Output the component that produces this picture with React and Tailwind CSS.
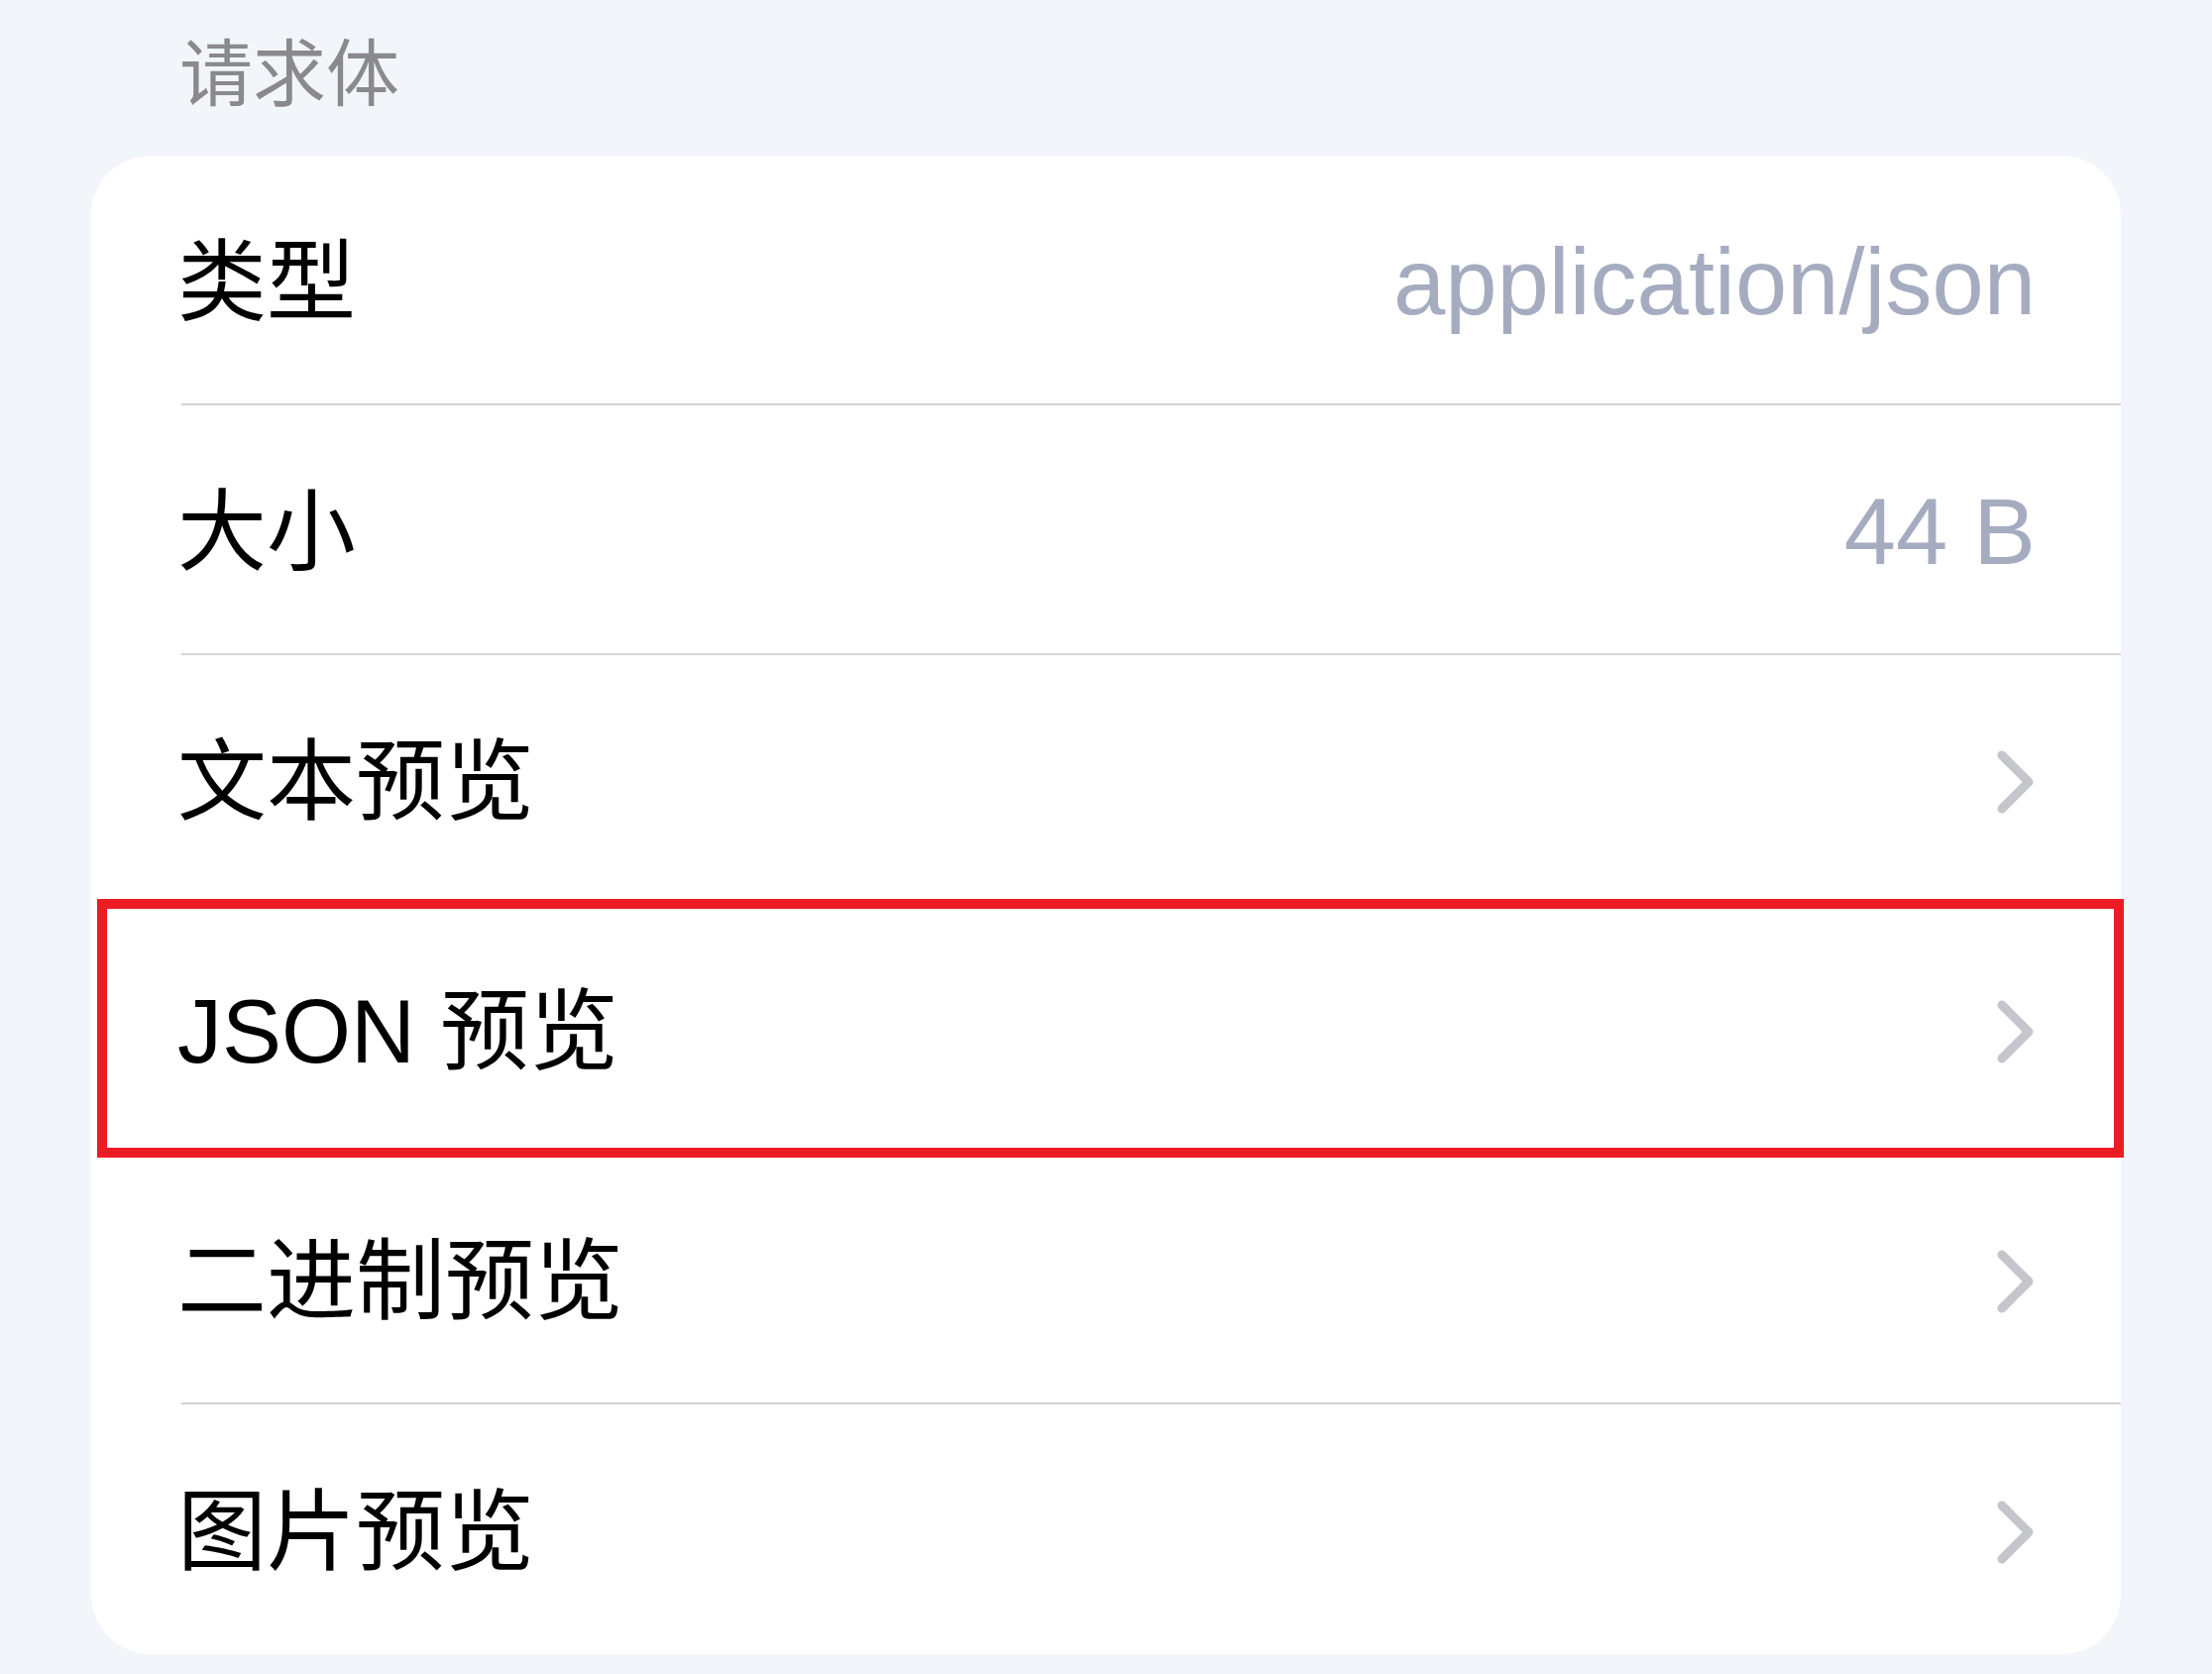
import { Fragment } from "react";

const rows = [
  { label: "类型", value: "application/json" },
  { label: "大小", value: "44 B" },
  { label: "文本预览", chevron: true },
  { label: "JSON 预览", chevron: true, marked: true },
  { label: "二进制预览", chevron: true },
  { label: "图片预览", chevron: true, last: true },
];

function Chevron() {
  return (
    <svg width="40" height="66" viewBox="0 0 40 66" fill="none" className="shrink-0">
      <polyline
        points="6,6 33,33 6,60"
        stroke="#c4c6cc"
        strokeWidth="9"
        strokeLinecap="round"
        strokeLinejoin="round"
      />
    </svg>
  );
}

export default function App() {
  return (
    <div
      className="min-h-screen w-full bg-[#f2f5f9] px-[92px] pb-[20px]"
      style={{ fontFamily: '"Liberation Sans", "Noto Sans CJK SC", sans-serif' }}
    >
      {/* section header */}
      <div className="pt-[39px] pl-[89px] text-[74px] leading-none text-[#8a8a8e]">
        请求体
      </div>

      {/* grouped card */}
      <div className="mt-[44px] flex flex-col rounded-[60px] bg-white">
        {rows.map((row, index) => (
          <div key={index} className="relative flex h-[252px] pl-[91px]">
            <div
              className={`flex flex-1 items-center justify-between pt-[5px] pr-[86px] ${
                row.last ? "" : "border-b-2 border-[#d4d4d8]"
              }`}
            >
              <span className="-ml-[4px] text-[90px] leading-none text-black">{row.label}</span>
              {row.value && (
                <span className="text-[94px] leading-none text-[#a6acc0]">{row.value}</span>
              )}
              {row.chevron && <Chevron />}
            </div>
            {row.marked && (
              <div className="pointer-events-none absolute -top-[6px] left-[6px] -right-[3px] -bottom-[3px] border-[10px] border-[#ec1c24]" />
            )}
          </div>
        ))}
      </div>
    </div>
  );
}
